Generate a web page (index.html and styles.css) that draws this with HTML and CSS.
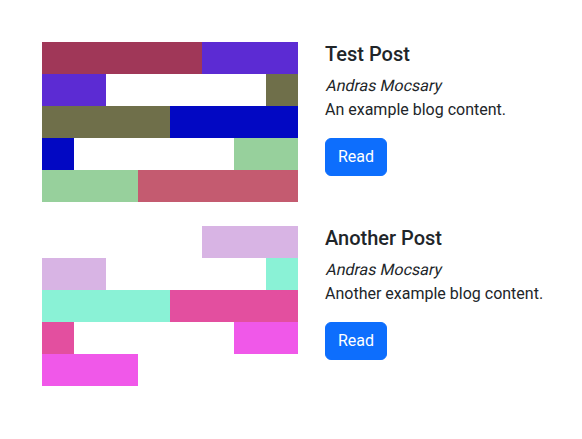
FILE: index.html
```html
<!DOCTYPE html>
<html>
<head>
<meta charset="utf-8">
<link rel="stylesheet" href="styles.css">
</head>
<body>
<main class="posts">
  <article class="post">
    <svg class="thumb" width="256" height="160" viewBox="0 0 8 5" shape-rendering="crispEdges">
      <rect x="0" y="0" width="5" height="1" fill="#a03758"/>
      <rect x="5" y="0" width="3" height="1" fill="#5c2bd3"/>
      <rect x="0" y="1" width="2" height="1" fill="#5c2bd3"/>
      <rect x="7" y="1" width="1" height="1" fill="#6f6f4a"/>
      <rect x="0" y="2" width="4" height="1" fill="#6f6f4a"/>
      <rect x="4" y="2" width="4" height="1" fill="#0208c3"/>
      <rect x="0" y="3" width="1" height="1" fill="#0208c3"/>
      <rect x="6" y="3" width="2" height="1" fill="#97d09c"/>
      <rect x="0" y="4" width="3" height="1" fill="#97d09c"/>
      <rect x="3" y="4" width="5" height="1" fill="#c45b70"/>
    </svg>
    <div class="body">
      <h5 class="title">Test Post</h5>
      <p class="author"><span class="slant">Andras Mocsary</span></p>
      <p class="text">An example blog content.</p>
      <a class="btn" href="#">Read</a>
    </div>
  </article>
  <article class="post">
    <svg class="thumb" width="256" height="160" viewBox="0 0 8 5" shape-rendering="crispEdges">
      <rect x="5" y="0" width="3" height="1" fill="#d8b4e4"/>
      <rect x="0" y="1" width="2" height="1" fill="#d8b4e4"/>
      <rect x="7" y="1" width="1" height="1" fill="#8af2d6"/>
      <rect x="0" y="2" width="4" height="1" fill="#8af2d6"/>
      <rect x="4" y="2" width="4" height="1" fill="#e34f9f"/>
      <rect x="0" y="3" width="1" height="1" fill="#e34f9f"/>
      <rect x="6" y="3" width="2" height="1" fill="#f058e9"/>
      <rect x="0" y="4" width="3" height="1" fill="#f058e9"/>
    </svg>
    <div class="body">
      <h5 class="title">Another Post</h5>
      <p class="author"><span class="slant">Andras Mocsary</span></p>
      <p class="text">Another example blog content.</p>
      <a class="btn" href="#">Read</a>
    </div>
  </article>
</main>
</body>
</html>
```
FILE: styles.css
```css
html, body {
  margin: 0;
  padding: 0;
  background: #fff;
}
body {
  font-family: Roboto, "Liberation Sans", sans-serif;
  font-size: 16px;
  line-height: 1.5;
  color: #212529;
}
.posts {
  display: flex;
  flex-direction: column;
  gap: 24px;
  padding: 42px 0 0 42px;
}
.post {
  display: flex;
  align-items: flex-start;
  gap: 27px;
}
.thumb {
  display: block;
  flex: none;
}
.body {
  display: flex;
  flex-direction: column;
  align-items: flex-start;
}
.title {
  margin: 0 0 8px;
  font-size: 20px;
  font-weight: 500;
  line-height: 1.2;
}
.author, .text {
  margin: 0;
}
.slant {
  display: inline-block;
  transform: skewX(-12deg);
  transform-origin: 0 75%;
}
.text {
  margin-bottom: 16px;
}
.btn {
  display: inline-block;
  padding: 6px 12px;
  border: 1px solid #0d6efd;
  border-radius: 6px;
  background: #0d6efd;
  color: #fff;
  text-decoration: none;
  font-size: 16px;
  line-height: 24px;
}
```
